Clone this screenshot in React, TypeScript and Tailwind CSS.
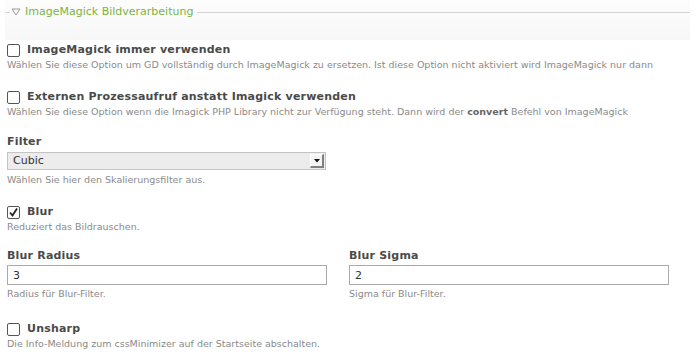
const font = "font-['DejaVu_Sans',Verdana,sans-serif]";

function Box({ checked = false }: { checked?: boolean }) {
  return (
    <span className="flex h-[13px] w-[13px] shrink-0 items-center justify-center rounded-[2px] border border-[#555] bg-white">
      {checked && (
        <svg width="11" height="11" viewBox="0 0 11 11">
          <path d="M2 5.5 L4.5 8.5 L9 1.5" fill="none" stroke="#222" strokeWidth="1.8" />
        </svg>
      )}
    </span>
  );
}

function Hint({ children, className = "" }: { children: React.ReactNode; className?: string }) {
  return <p className={`h-[13px] text-[9.5px] leading-[13px] text-[#8a8a8a] ${className}`}>{children}</p>;
}

function CheckOption({
  label,
  checked,
  children,
  className = "",
}: {
  label: string;
  checked?: boolean;
  children: React.ReactNode;
  className?: string;
}) {
  return (
    <div className={className}>
      <label className="flex h-[16px] items-center gap-[7px]">
        <Box checked={checked} />
        <span className="text-[11px] font-bold tracking-[0.2px] text-[#4a4a4a]">{label}</span>
      </label>
      <Hint>{children}</Hint>
    </div>
  );
}

function TextField({ label, value, hint }: { label: string; value: string; hint: string }) {
  return (
    <div className="w-[320px]">
      <div className="h-[16px] text-[11px] font-bold leading-[16px] tracking-[0.2px] text-[#4a4a4a]">{label}</div>
      <input
        readOnly
        value={value}
        className="mt-[1px] block h-[20px] w-full border border-[#aaa] bg-white px-[5px] text-[11px] text-[#333] outline-none"
      />
      <Hint className="mt-[2px]">{hint}</Hint>
    </div>
  );
}

export default function App() {
  return (
    <div className={`h-[359px] w-[698px] overflow-hidden bg-white ${font}`}>
      <div className="mx-[5px] h-[40px] w-[685px] bg-gradient-to-b from-[#fdfdfd] to-[#f7f7f7]">
        <div className="flex h-[24px] items-center">
          <div className="h-px w-[5px] bg-[#d4d4d4]" />
          <svg width="10" height="8" viewBox="0 0 10 8" className="ml-[1px]">
            <path d="M1 1 L9 1 L5 7 Z" fill="none" stroke="#999" strokeWidth="1" />
          </svg>
          <span className="ml-[4px] text-[11px] text-[#7cb342]">ImageMagick Bildverarbeitung</span>
          <div className="ml-[4px] h-px flex-1 bg-[#d4d4d4]" />
        </div>
      </div>

      <div className="pl-[7px]">
        <CheckOption label="ImageMagick immer verwenden" className="mt-[2px]">
          Wählen Sie diese Option um GD vollständig durch ImageMagick zu ersetzen. Ist diese Option nicht aktiviert wird ImageMagick nur dann
        </CheckOption>

        <CheckOption label="Externen Prozessaufruf anstatt Imagick verwenden" className="mt-[18px]">
          Wählen Sie diese Option wenn die Imagick PHP Library nicht zur Verfügung steht. Dann wird der{" "}
          <b className="text-[#666]">convert</b> Befehl von ImageMagick
        </CheckOption>

        <div className="mt-[16px]">
          <div className="h-[16px] text-[11px] font-bold leading-[16px] tracking-[0.2px] text-[#4a4a4a]">Filter</div>
          <div className="mt-[2px] flex h-[18px] w-[319px] items-center border border-[#c4c4c4] bg-[#ececec]">
            <span className="ml-[5px] flex-1 text-[11px] text-[#333]">Cubic</span>
            <span className="mr-[1px] flex h-[14px] w-[14px] items-center justify-center border-t border-l border-t-[#fff] border-l-[#fff] border-r-2 border-b-2 border-r-[#808080] border-b-[#808080] bg-[#f4f4f4]">
              <svg width="6" height="4" viewBox="0 0 6 4">
                <path d="M0 0 L6 0 L3 3.5 Z" fill="#111" />
              </svg>
            </span>
          </div>
          <Hint className="mt-[3px]">Wählen Sie hier den Skalierungsfilter aus.</Hint>
        </div>

        <CheckOption label="Blur" checked className="mt-[18px]">
          Reduziert das Bildrauschen.
        </CheckOption>

        <div className="mt-[15px] flex gap-[22px]">
          <TextField label="Blur Radius" value="3" hint="Radius für Blur-Filter." />
          <TextField label="Blur Sigma" value="2" hint="Sigma für Blur-Filter." />
        </div>

        <CheckOption label="Unsharp" className="mt-[21px]">
          Die Info-Meldung zum cssMinimizer auf der Startseite abschalten.
        </CheckOption>
      </div>
    </div>
  );
}
